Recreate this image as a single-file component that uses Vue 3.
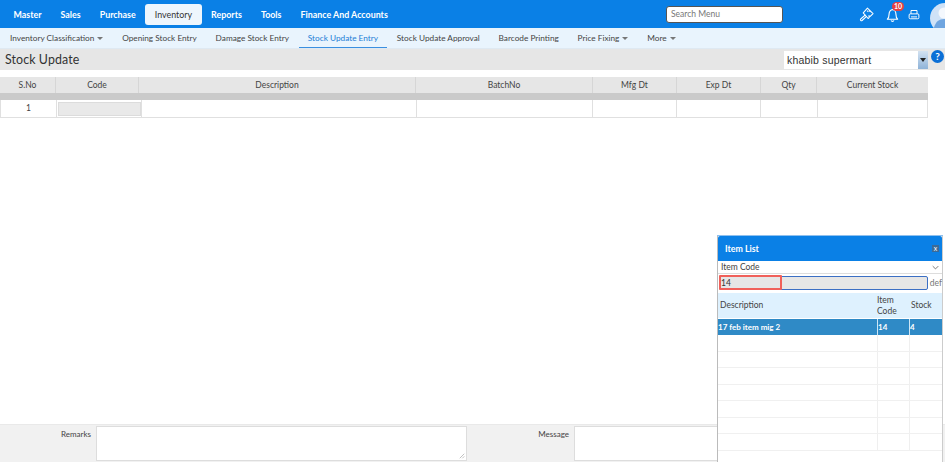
<script setup>
const menu = ['Master', 'Sales', 'Purchase', 'Inventory', 'Reports', 'Tools', 'Finance And Accounts']
const sub = [
  { t: 'Inventory Classification', caret: true },
  { t: 'Opening Stock Entry' },
  { t: 'Damage Stock Entry' },
  { t: 'Stock Update Entry', active: true },
  { t: 'Stock Update Approval' },
  { t: 'Barcode Printing' },
  { t: 'Price Fixing', caret: true },
  { t: 'More', caret: true }
]
const cols = ['S.No', 'Code', 'Description', 'BatchNo', 'Mfg Dt', 'Exp Dt', 'Qty', 'Current Stock']
const emptyRows = Array.from({ length: 7 })
</script>

<template>
  <div class="page">
    <header class="top">
      <nav class="menu">
        <a v-for="m in menu" :key="m" class="mi" :class="{ on: m === 'Inventory' }">{{ m }}</a>
      </nav>
      <div class="search">Search Menu</div>
      <div class="icons">
        <svg class="ic brush" viewBox="0 0 16 16" fill="none" stroke="#fff" stroke-width="1.1" stroke-linejoin="round">
          <path d="M9 1.200 15 7l-3 3-1.500-.6.500 1.700-1.300 1.200L4.500 6.200z" />
          <path d="M6.800 8.400 1.800 12.800a1.100 1.100 0 0 0 1.500 1.600L8 10" />
          <path d="M8.500 3.800l1.500 1.500M10.500 3.500l1.800 1.800" />
        </svg>
        <span class="bell">
          <svg class="ic" viewBox="0 0 16 16" fill="none" stroke="#fff" stroke-width="1.2" stroke-linejoin="round">
            <path d="M2.500 13c1.200-1 1.800-2.200 1.800-5C4.300 5 6 2.800 8 2.800s3.700 2.200 3.700 5.200c0 2.800.6 4 1.800 5z" />
            <path d="M6.500 14.300a1.600 1.600 0 0 0 3 0" />
          </svg>
          <b class="badge">10</b>
        </span>
        <svg class="printer" viewBox="0 0 16 16" fill="none" stroke="#fff" stroke-width="1.300" stroke-linejoin="round">
          <path d="M4 6.500V2h8v4.500" />
          <rect x="1.500" y="6.500" width="13" height="6.500" rx="1.500" />
          <path d="M4 10.500h8" />
        </svg>
        <svg class="avatar" viewBox="0 0 30 30">
          <circle cx="15" cy="15" r="15" fill="#cfe2f7" />
          <circle cx="14" cy="10" r="5.500" fill="#f4f8fd" />
          <path d="M3 30c1-10 5-14 11-14s11 4 12 14z" fill="#6fa5e0" />
        </svg>
      </div>
    </header>

    <nav class="subnav">
      <a v-for="s in sub" :key="s.t" class="si" :class="{ on: s.active }">
        {{ s.t }}<i v-if="s.caret" class="caret"></i>
      </a>
    </nav>

    <div class="titlebar">
      <h1>Stock Update</h1>
      <div class="company">
        <span class="cname">khabib supermart</span>
        <span class="cbtn"><i></i></span>
      </div>
      <span class="help">?</span>
    </div>

    <main class="content">
      <div class="grid head">
        <div v-for="c in cols" :key="c" class="hc">{{ c }}</div>
      </div>
      <div class="band"></div>
      <div class="grid row">
        <div class="c num">1</div>
        <div class="c code"><span class="codebox"></span></div>
        <div v-for="n in 6" :key="n" class="c"></div>
      </div>
    </main>

    <footer class="foot">
      <label class="lbl l1">Remarks</label>
      <div class="ta first"><svg class="grip" viewBox="0 0 8 8" stroke="#999" stroke-width=".8"><path d="M1 7 7 1M4.500 7 7 4.500" /></svg></div>
      <label class="lbl l2">Message</label>
      <div class="ta second"></div>
    </footer>

    <aside class="panel">
      <div class="phead">
        <span>Item List</span>
        <b class="close">x</b>
      </div>
      <div class="pselect">
        <span>Item Code</span>
        <svg viewBox="0 0 10 6" fill="none" stroke="#555" stroke-width="1.100"><path d="m1 1 4 4 4-4" /></svg>
      </div>
      <div class="psearch">
        <div class="pinput">14</div>
        <span class="def">def</span>
        <span class="redbox"></span>
      </div>
      <div class="ptable">
        <div class="pr phd">
          <div>Description</div>
          <div class="codehd">Item Code</div>
          <div>Stock</div>
        </div>
        <div class="pr sel">
          <div>17 feb item mig 2</div>
          <div>14</div>
          <div>4</div>
        </div>
        <div v-for="(r, i) in emptyRows" :key="i" class="pr empty">
          <div></div>
          <div></div>
          <div></div>
        </div>
      </div>
    </aside>
  </div>
</template>

<style>
html, body { margin: 0; background: #fff; overflow: hidden; }
</style>

<style scoped>
.page {
  position: relative;
  width: 945px;
  height: 462px;
  overflow: hidden;
  display: flex;
  flex-direction: column;
  font-family: Lato, "Liberation Sans", sans-serif;
  color: #333;
}
.top {
  height: 28px;
  background: #0a80e6;
  display: flex;
  align-items: center;
  flex: none;
  overflow: hidden;
}
.menu { display: flex; align-items: center; padding-left: 4px; width: 662px; flex: none; }
.mi {
  color: #fff;
  font-size: 8.900px;
  font-weight: 700;
  padding: 0 9.500px;
  line-height: 21px;
  white-space: nowrap;
}
.mi.on {
  background: #eef6fd;
  color: #333;
  font-weight: 400;
  border-radius: 3px;
}
.search {
  width: 117px;
  height: 17px;
  flex: none;
  box-sizing: border-box;
  background: #fff;
  border: 1px solid #555;
  border-radius: 3px;
  font-size: 8.500px;
  line-height: 15px;
  color: #777;
  padding-left: 4px;
}
.icons { position: relative; flex: 1; height: 28px; display: flex; align-items: center; padding-left: 76px; gap: 11px; }
.ic { width: 15px; height: 15px; display: block; flex: none; }
.printer { width: 12px; height: 12px; display: block; flex: none; margin-left: -3px; margin-top: 2px; }
.bell { position: relative; display: block; flex: none; }
.badge {
  position: absolute;
  left: 7px;
  top: -5px;
  width: 12px;
  height: 9px;
  background: #e84040;
  color: #fff;
  border-radius: 5px;
  font-size: 7px;
  line-height: 9px;
  text-align: center;
}
.avatar { position: absolute; left: 147px; top: 3px; width: 30px; height: 30px; }
.subnav {
  height: 20px;
  background: #e9f4fd;
  display: flex;
  align-items: stretch;
  padding-left: 10px;
  gap: 18.800px;
  flex: none;
  border-bottom: 1px solid #dfe9f2;
  box-sizing: content-box;
}
.si {
  font-size: 8.250px;
  line-height: 21px;
  color: #444;
  white-space: nowrap;
}
.si.on {
  color: #1c7ed6;
  border-bottom: 1px solid #3a8fe0;
  margin: 0 -9px;
  padding: 0 9px;
}
.caret {
  display: inline-block;
  width: 0;
  height: 0;
  margin-left: 3px;
  vertical-align: 1px;
  border-left: 3.500px solid transparent;
  border-right: 3.500px solid transparent;
  border-top: 3.500px solid #777;
}
.titlebar {
  height: 21px;
  background: #e6e6e6;
  display: flex;
  align-items: center;
  flex: none;
  padding-left: 5px;
  position: relative;
}
h1 {
  margin: 0;
  font-size: 12.400px;
  font-weight: 400;
  color: #333;
  flex: 1;
  letter-spacing: .1px;
}
.company {
  width: 144px;
  height: 18px;
  background: #fff;
  margin-right: 3px;
  display: flex;
  justify-content: space-between;
  font-family: "Liberation Sans", sans-serif;
  font-size: 10.500px;
  line-height: 18px;
  color: #333;
}
.cname { padding-left: 3px; letter-spacing: .2px; }
.cbtn {
  width: 10px;
  height: 18px;
  background: linear-gradient(#d3e2f1, #8fb3d8);
  position: relative;
}
.cbtn i {
  position: absolute;
  left: 2px;
  top: 7px;
  border-left: 3px solid transparent;
  border-right: 3px solid transparent;
  border-top: 4px solid #222;
}
.help {
  width: 13px;
  height: 13px;
  border-radius: 50%;
  background: #0b6fd6;
  color: #fff;
  font-size: 10px;
  font-weight: 700;
  line-height: 13px;
  text-align: center;
  margin-right: 1px;
  margin-top: -6px;
}
.content { flex: 1; padding-top: 7px; }
.grid {
  width: 928px;
  display: grid;
}
.head { background: #e6e6e6; height: 16px; grid-template-columns: 56px 83px 277px 177px 84px 84px 56px 111px; }
.hc {
  font-size: 8.500px;
  line-height: 16px;
  text-align: center;
  color: #444;
  border-right: 1px solid #d6d6d6;
}
.hc:last-child { border-right: 0; }
.band { width: 928px; height: 7px; background: #cacaca; }
.row {
  height: 17px;
  border-bottom: 1px solid #e0e0e0;
  box-sizing: content-box;
  grid-template-columns: 56px 85px 275px 176px 84px 84px 57px 111px;
}
.c { border-left: 1px solid #e0e0e0; height: 17px; box-sizing: border-box; }
.row .c:last-child { border-right: 1px solid #e0e0e0; }
.num { font-size: 8.500px; line-height: 17px; text-align: center; color: #444; }
.code { padding: 2px 0 1px 1px; }
.codebox { display: block; height: 14px; background: #e9e9e9; border: 1px solid #dcdcdc; box-sizing: border-box; }
.foot {
  height: 38px;
  flex: none;
  background: #f1f1f1;
  display: flex;
  align-items: flex-start;
  border-top: 1px solid #e9e9e9;
  box-sizing: border-box;
  padding-top: 1px;
}
.lbl {
  font-size: 8px;
  line-height: 12px;
  color: #444;
  text-align: right;
  padding-top: 2px;
  flex: none;
}
.l1 { width: 91px; margin-right: 5px; }
.l2 { width: 102px; margin-right: 5px; }
.ta {
  height: 35px;
  background: #fff;
  border: 1px solid #ddd;
  box-sizing: border-box;
  position: relative;
  flex: none;
}
.first { width: 371px; }
.second { width: 150px; }
.grip { position: absolute; right: 1px; bottom: 1px; width: 6px; height: 6px; }
.panel {
  position: absolute;
  left: 717px;
  top: 236px;
  width: 226px;
  height: 240px;
  background: #fff;
  box-sizing: border-box;
  border-left: 1px solid #bbb;
  border-right: 1px solid #ccc;
  box-shadow: 0 -1px 0 #8fc0ee;
}
.phead {
  height: 25px;
  background: #0a80e6;
  color: #fff;
  font-size: 8.800px;
  font-weight: 700;
  line-height: 26px;
  padding-left: 7px;
  position: relative;
  border-radius: 2px 2px 0 0;
}
.close {
  position: absolute;
  right: 3px;
  top: 9px;
  width: 7px;
  height: 7px;
  background: #3c6a96;
  font-size: 7px;
  line-height: 6px;
  text-align: center;
  font-weight: 400;
}
.pselect {
  height: 13px;
  box-sizing: border-box;
  display: flex;
  justify-content: space-between;
  align-items: center;
  padding: 0 2px 0 3px;
  font-size: 8.500px;
  color: #444;
  border-bottom: 1px solid #ddd;
}
.pselect svg { width: 7px; height: 5px; margin-right: 1px; }
.psearch { position: relative; display: flex; align-items: center; height: 18px; padding-left: 1px; }
.pinput {
  width: 209px;
  height: 14px;
  box-sizing: border-box;
  background: #e6e6e6;
  border: 1px solid #3b6fc4;
  border-radius: 2px;
  font-size: 8.500px;
  line-height: 12px;
  padding-left: 1px;
}
.def { font-size: 8.500px; color: #777; margin-left: 2px; }
.redbox {
  position: absolute;
  left: 1px;
  top: 1px;
  width: 63px;
  height: 15px;
  border: 2px solid #f0605a;
  box-sizing: border-box;
  border-radius: 1px;
}
.ptable { margin-top: 1px; }
.pr {
  display: grid;
  grid-template-columns: 159px 32px 1fr;
}
.phd { height: 25px; background: #def1fe; font-size: 8.500px; color: #444; align-items: center; line-height: 11px; }
.phd div { padding-left: 2px; }
.phd .codehd { padding-left: 0; }
.sel {
  height: 16px;
  margin-top: 1px;
  color: #fff;
  font-size: 8px;
  font-weight: 700;
  line-height: 16px;
}
.sel div { background: #2f8ac6; border-left: 1px solid #cfe6f5; }
.sel div:first-child { border-left: 0; }
.empty { height: 16.500px; border-bottom: 1px solid #f0f0f0; box-sizing: border-box; }
.empty div { border-left: 1px solid #efefef; }
.empty div:first-child { border-left: 0; }
</style>
